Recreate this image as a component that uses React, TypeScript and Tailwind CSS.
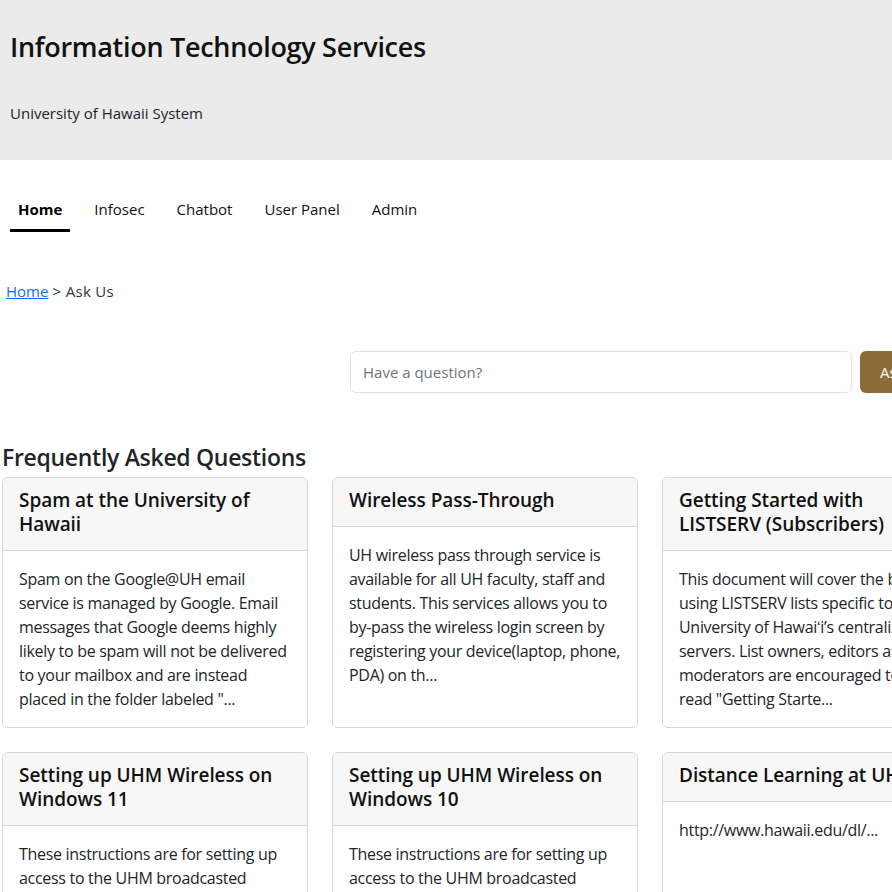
const navItems = ['Home', 'Infosec', 'Chatbot', 'User Panel', 'Admin'];

const faqs = [
  {
    title: 'Spam at the University of Hawaii',
    body: 'Spam on the Google@UH email service is managed by Google. Email messages that Google deems highly likely to be spam will not be delivered to your mailbox and are instead placed in the folder labeled "...',
  },
  {
    title: 'Wireless Pass-Through',
    body: 'UH wireless pass through service is available for all UH faculty, staff and students. This services allows you to by-pass the wireless login screen by registering your device(laptop, phone, PDA) on th...',
  },
  {
    title: 'Getting Started with LISTSERV\u00a0(Subscribers)',
    body: 'This document will cover the basics of using LISTSERV lists specific to the University of Hawaiʻi’s centralized servers. List owners, editors and moderators are encouraged to read\u00a0"Getting Starte...',
  },
  {
    title: 'Setting up UHM Wireless on Windows 11',
    body: 'These instructions are for setting up access to the UHM broadcasted wireless network on a computer running Windows 11. Before you begin, make sure your device is up to da...',
  },
  {
    title: 'Setting up UHM Wireless on Windows 10',
    body: 'These instructions are for setting up access to the UHM broadcasted wireless network on a computer running Windows 10. Before you begin, make sure your device is up to da...',
  },
  {
    title: 'Distance Learning at UH',
    body: 'http://www.hawaii.edu/dl/...',
  },
];

export default function App() {
  return (
    <div className="min-h-screen overflow-x-hidden bg-white text-[#212529] font-['Open_Sans',sans-serif]">
      {/* Header band */}
      <header className="bg-[#ebebeb] h-[160px] px-[10px] pt-[30px]">
        <h1 className="text-[27px] leading-[34px] font-semibold tracking-[-0.3px] text-[#111]">
          Information Technology Services
        </h1>
        <p className="mt-[37px] text-[15px] leading-6 text-[#212529]">University of Hawaii System</p>
      </header>

      {/* Tabs */}
      <nav className="mt-[29px] px-[10px] flex gap-4">
        {navItems.map((item, i) => (
          <a
            key={item}
            href="#"
            className={
              i === 0
                ? 'px-2 py-2 text-[15px] leading-6 font-bold text-black border-b-[3px] border-black'
                : 'px-2 py-2 text-[15px] leading-6 text-[#111] border-b-[3px] border-transparent'
            }
          >
            {item}
          </a>
        ))}
      </nav>

      {/* Breadcrumb */}
      <div className="mt-[47px] px-[6px] text-[15px] leading-6 text-[#333]">
        <a href="#" className="text-[#0d6efd] underline">
          Home
        </a>
        <span className="tracking-[0.3px]"> &gt; Ask Us</span>
      </div>

      {/* Search */}
      <form className="mt-[48px] pl-[350px] flex gap-2 w-[1000px]">
        <input
          type="text"
          placeholder="Have a question?"
          className="w-[502px] h-[42px] rounded-md border border-[#dee2e6] px-3 text-[15px] text-[#212529] placeholder:text-[#6c757d] outline-none"
        />
        <button
          type="button"
          className="h-[42px] px-5 rounded-md bg-[#8c6d3a] text-white text-[15px] font-medium"
        >
          Ask
        </button>
      </form>

      {/* FAQ */}
      <section className="mt-[50px] px-[2px]">
        <h2 className="text-[23px] leading-[28px] font-semibold tracking-[-0.3px] text-[#212529] mb-[6px]">
          Frequently Asked Questions
        </h2>
        <div className="grid grid-cols-[306px_306px_306px] gap-6">
          {faqs.map((faq) => (
            <div key={faq.title} className="flex flex-col rounded-md border border-[#d6d6d6] overflow-hidden">
              <div className="bg-[#f7f7f7] border-b border-[#d6d6d6] px-4 pt-[10px] pb-[14px]">
                <h3 className="text-[19px] leading-6 font-semibold tracking-[-0.05px] text-[#111]">{faq.title}</h3>
              </div>
              <div className="flex-1 bg-white p-4">
                <p className="text-[16px] leading-6 tracking-[-0.3px] text-[#212529]">{faq.body}</p>
              </div>
            </div>
          ))}
        </div>
      </section>
    </div>
  );
}
